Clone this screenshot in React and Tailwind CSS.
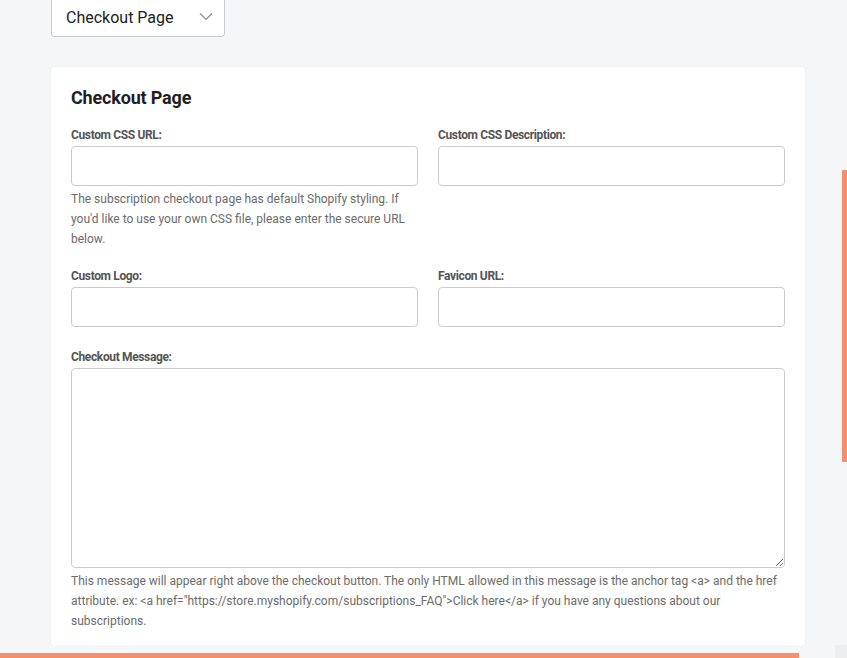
import { useState } from "react";

const labelCls =
  "text-[12px] font-bold text-[#545454] tracking-[-0.03em] leading-[16px] mb-[3px]";

const Field = ({ label, help }) => (
  <div className="flex flex-col">
    <label className={labelCls}>{label}</label>
    <input
      type="text"
      className="h-[40px] w-full rounded-[4px] border border-[#c9cbcf] bg-white px-3 text-sm focus:outline-none"
    />
    {help && (
      <p className="mt-[3px] text-[12px] leading-[20px] text-[#6b6b6b]">{help}</p>
    )}
  </div>
);

const App = () => {
  const [page, setPage] = useState("Checkout Page");

  return (
    <div
      className="relative h-[658px] w-[847px] overflow-hidden bg-[#f5f6f8]"
      style={{ fontFamily: "Roboto, 'Noto Sans', sans-serif" }}
    >
      <div className="px-[51px] pt-0">
        <div className="relative -mt-[2px] h-[39px] w-[174px] rounded-b-[4px] border border-t-0 border-[#c9cbcf] bg-white">
          <select
            value={page}
            onChange={(e) => setPage(e.target.value)}
            className="h-full w-full appearance-none bg-transparent pl-[14px] pt-[2px] text-[16px] text-[#202223] focus:outline-none"
          >
            <option>Checkout Page</option>
            <option>Customer Portal</option>
          </select>
          <svg
            className="pointer-events-none absolute right-[11px] top-[14px]"
            width="14"
            height="9"
            viewBox="0 0 14 9"
            fill="none"
          >
            <path d="M1 1.5l6 6 6-6" stroke="#8c8c8c" strokeWidth="1.2" />
          </svg>
        </div>

        <div className="mt-[30px] w-[754px] rounded-[4px] bg-white px-[20px] pb-[15px] pt-[20px] shadow-[0_0_2px_rgba(0,0,0,0.06)]">
          <h2 className="text-[18px] font-bold leading-[22px] text-[#1f1f1f] tracking-[-0.01em]">
            Checkout Page
          </h2>

          <div className="mt-[18px] grid grid-cols-2 gap-x-[20px]">
            <Field
              label="Custom CSS URL:"
              help="The subscription checkout page has default Shopify styling. If you'd like to use your own CSS file, please enter the secure URL below."
            />
            <Field label="Custom CSS Description:" />
          </div>

          <div className="mt-[19px] grid grid-cols-2 gap-x-[20px]">
            <Field label="Custom Logo:" />
            <Field label="Favicon URL:" />
          </div>

          <div className="mt-[22px] flex flex-col">
            <label className={labelCls}>Checkout Message:</label>
            <textarea className="block h-[200px] w-full rounded-[4px] border border-[#c9cbcf] bg-white p-2 text-sm focus:outline-none" />
            <p className="mt-[3px] text-[12px] leading-[20px] text-[#6b6b6b]">
              This message will appear right above the checkout button. The only HTML allowed in this
              message is the anchor tag &lt;a&gt; and the href attribute. ex: &lt;a
              href="https://store.myshopify.com/subscriptions_FAQ"&gt;Click here&lt;/a&gt; if you have
              any questions about our subscriptions.
            </p>
          </div>
        </div>
      </div>

      {/* scrollbars */}
      <div className="absolute right-0 top-[170px] h-[292px] w-[5px] bg-[#f2906b]" />
      <div className="absolute bottom-0 left-0 h-[5px] w-[799px] bg-[#f2906b]" />
      <div className="absolute bottom-0 right-0 h-[13px] w-[12px] bg-[#eeeeee]" />
    </div>
  );
};

export default App;
